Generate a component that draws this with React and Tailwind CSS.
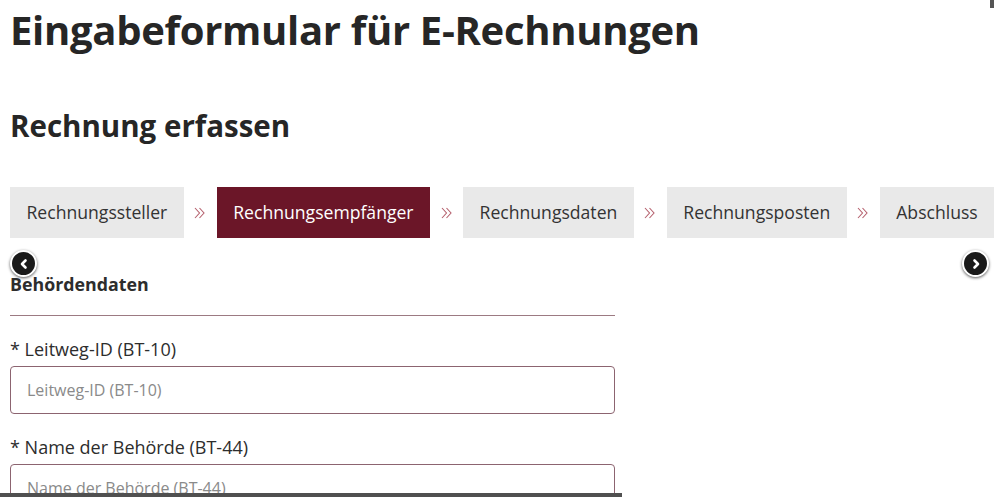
const steps = [
  "Rechnungssteller",
  "Rechnungsempfänger",
  "Rechnungsdaten",
  "Rechnungsposten",
  "Abschluss",
];

const Chevron = ({ dir }) => (
  <svg width="12" height="12" viewBox="0 0 12 12">
    <path
      d={dir === "left" ? "M7.5 2.5 L4 6 L7.5 9.5" : "M4.5 2.5 L8 6 L4.5 9.5"}
      fill="none"
      stroke="white"
      strokeWidth="2.6"
      strokeLinecap="round"
      strokeLinejoin="round"
    />
  </svg>
);

const NavButton = ({ side }) => (
  <button
    className={
      "absolute top-[250px] w-[27px] h-[27px] rounded-full bg-[#1a1a1a] border-[2px] border-white shadow-[0_1px_3px_rgba(0,0,0,0.65)] flex items-center justify-center " +
      (side === "left" ? "left-[10px]" : "left-[962px]")
    }
  >
    <Chevron dir={side} />
  </button>
);

const StepArrow = () => (
  <span className="w-[33px] flex justify-center">
    <svg width="12" height="12" viewBox="0 0 12 12">
      <path
        d="M1 1 L5.5 6 L1 11 M5.5 1 L10 6 L5.5 11"
        fill="none"
        stroke="#b5606d"
        strokeWidth="1.1"
      />
    </svg>
  </span>
);

const Field = ({ label, className = "" }) => (
  <div className={className}>
    <label className="block text-[18px] leading-6 text-[#2d2d2d]">* {label}</label>
    <input
      type="text"
      placeholder={label}
      className="mt-[5px] w-[605px] h-[48px] border border-[#8c6470] rounded-[4px] px-4 text-[16px] text-[#333] placeholder:text-[#8a8a8a] outline-none"
    />
  </div>
);

export default function App() {
  return (
    <div
      className="relative w-[994px] h-[497px] overflow-hidden bg-white pl-[10px] pt-[6px]"
      style={{ fontFamily: '"Open Sans", sans-serif' }}
    >
      <h1 className="text-[40px] leading-[48px] font-bold text-[#262626] tracking-[-0.3px]">
        Eingabeformular für E-Rechnungen
      </h1>
      <h2 className="mt-[52px] text-[29.5px] leading-[40px] font-bold text-[#262626]">
        Rechnung erfassen
      </h2>

      <div className="mt-[41px] flex items-center">
        {steps.map((s, i) => (
          <div key={s} className="flex items-center">
            {i > 0 && <StepArrow />}
            <div
              className={
                "h-[51px] px-[16.5px] flex items-center text-[17.6px] whitespace-nowrap " +
                (i === 1 ? "bg-[#6b1628] text-white" : "bg-[#e9e9e9] text-[#333]")
              }
            >
              {s}
            </div>
          </div>
        ))}
      </div>

      <NavButton side="left" />
      <NavButton side="right" />

      <div className="w-[605px]">
        <h3 className="mt-[34px] text-[17.8px] leading-6 font-bold text-[#2d2d2d]">Behördendaten</h3>
        <div className="mt-[19px] h-px bg-[#9c7a82]" />
        <Field label="Leitweg-ID (BT-10)" className="mt-[21px]" />
        <Field label="Name der Behörde (BT-44)" className="mt-[21px]" />
      </div>

      <div className="absolute left-0 bottom-0 w-[622px] h-[4px] bg-[#505050]" />
      <div className="absolute right-0 top-0 w-[4px] h-[8px] bg-[#555]" />
    </div>
  );
}
